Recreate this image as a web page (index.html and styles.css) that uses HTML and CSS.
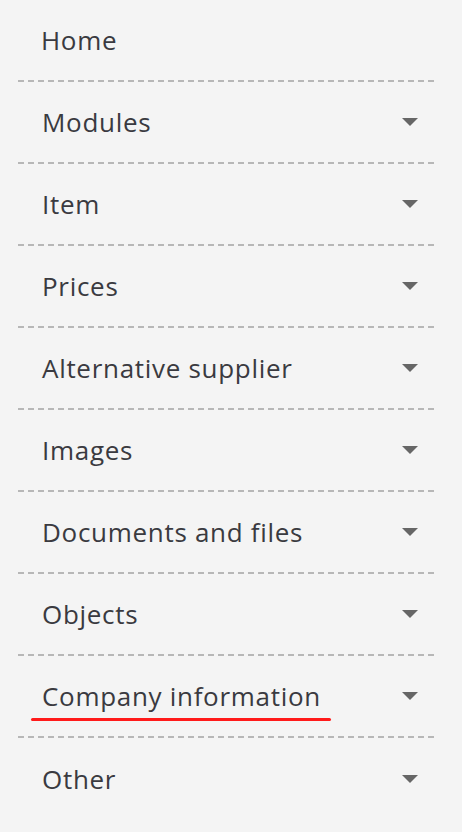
FILE: index.html
```html
<!DOCTYPE html>
<html lang="en">
<head>
    <meta charset="UTF-8">
    <meta name="viewport" content="width=device-width, initial-scale=1.0">
    <title>Menu</title>
    <link rel="stylesheet" href="styles.css">
</head>
<body>
    <nav class="side-menu">
        <ul>
            <li class="menu-item home"><span>Home</span></li>
            <li class="menu-item"><span>Modules</span><i class="caret"></i></li>
            <li class="menu-item"><span>Item</span><i class="caret"></i></li>
            <li class="menu-item"><span>Prices</span><i class="caret"></i></li>
            <li class="menu-item"><span>Alternative supplier</span><i class="caret"></i></li>
            <li class="menu-item"><span>Images</span><i class="caret"></i></li>
            <li class="menu-item"><span>Documents and files</span><i class="caret"></i></li>
            <li class="menu-item"><span>Objects</span><i class="caret"></i></li>
            <li class="menu-item marked"><span>Company information</span><i class="caret"></i></li>
            <li class="menu-item last"><span>Other</span><i class="caret"></i></li>
        </ul>
    </nav>
</body>
</html>
```

FILE: styles.css
```css
* {
    box-sizing: border-box;
}

body {
    margin: 0;
    padding: 0;
    background-color: #f4f4f4;
    font-family: "Open Sans", Arial, sans-serif;
    color: #3a3a40;
}

.side-menu ul {
    list-style: none;
    margin: 0 0 0 18px;
    padding: 0;
    width: 416px;
}

.menu-item {
    position: relative;
    display: flex;
    align-items: center;
    justify-content: space-between;
    height: 82px;
    padding: 0 16px 0 24px;
    border-bottom: 2px dashed #b7b7b7;
    font-size: 26px;
    letter-spacing: 0.7px;
}

.menu-item.home {
    padding-left: 23px;
}

.menu-item.last {
    border-bottom: none;
}

.caret {
    width: 0;
    height: 0;
    border-left: 8px solid transparent;
    border-right: 8px solid transparent;
    border-top: 8px solid #666;
}

/* red mark under company information */
.menu-item.marked span {
    position: relative;
}

.menu-item.marked span::after {
    content: "";
    position: absolute;
    left: -11px;
    right: -10px;
    bottom: -7px;
    height: 3px;
    border-radius: 2px;
    background-color: #ff1a1a;
}
```
